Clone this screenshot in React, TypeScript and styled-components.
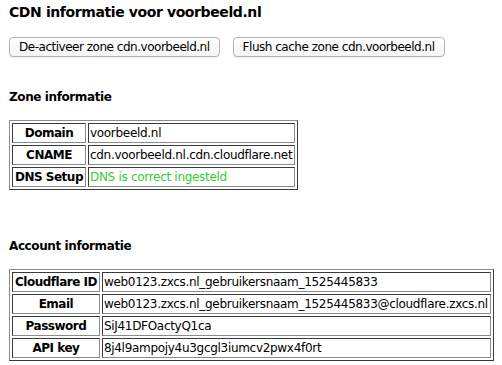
import React from "react";
import styled, { createGlobalStyle } from "styled-components";

const GlobalStyle = createGlobalStyle`
  html, body {
    margin: 0;
    padding: 0;
    background: #ffffff;
  }
  body {
    font-family: Verdana, "DejaVu Sans", sans-serif;
    color: #000000;
  }
`;

const Page = styled.div`
  padding: 4px 9px 0;
`;

const Title = styled.h1`
  margin: 0;
  font-size: 14px;
  line-height: 17px;
  font-weight: bold;
  letter-spacing: -0.4px;
`;

const ButtonRow = styled.div`
  display: flex;
  gap: 13px;
  margin-top: 16px;
`;

const Button = styled.button`
  height: 20px;
  padding: 0 9px;
  font-family: "Lucida Grande", "DejaVu Sans", sans-serif;
  font-size: 12px;
  line-height: 18px;
  letter-spacing: -0.48px;
  color: #000000;
  background: linear-gradient(#ffffff, #f4f4f4);
  border: 1px solid #b4b4b4;
  border-radius: 4px;
  box-shadow: 0 1px 0 rgba(0, 0, 0, 0.06);
`;

const Heading = styled.h3<{ $top: number }>`
  margin: ${p => p.$top}px 0 0;
  font-size: 12px;
  line-height: 15px;
  font-weight: bold;
  letter-spacing: -0.4px;
`;

const InfoTable = styled.table`
  margin-top: 15px;
  border: 1px solid;
  border-color: #8a8a8a #3a3a3a #3a3a3a #8a8a8a;
  border-spacing: 2px;
  font-size: 12px;
`;

const Th = styled.th`
  border: 1px solid;
  border-color: #3a3a3a #8a8a8a #8a8a8a #3a3a3a;
  padding: 1px 2px;
  line-height: 16px;
  text-align: center;
  font-weight: bold;
  letter-spacing: -0.5px;
  white-space: nowrap;
`;

const Td = styled.td<{ $ok?: boolean }>`
  border: 1px solid;
  border-color: #3a3a3a #8a8a8a #8a8a8a #3a3a3a;
  padding: 1px 2px 1px 1px;
  line-height: 16px;
  letter-spacing: -0.3px;
  white-space: nowrap;
  color: ${p => (p.$ok ? "#33cc33" : "#000000")};
`;

type Row = { label: string; value: string; ok?: boolean };

const zone: Row[] = [
  { label: "Domain", value: "voorbeeld.nl" },
  { label: "CNAME", value: "cdn.voorbeeld.nl.cdn.cloudflare.net" },
  { label: "DNS Setup", value: "DNS is correct ingesteld", ok: true },
];

const account: Row[] = [
  { label: "Cloudflare ID", value: "web0123.zxcs.nl_gebruikersnaam_1525445833" },
  { label: "Email", value: "web0123.zxcs.nl_gebruikersnaam_1525445833@cloudflare.zxcs.nl" },
  { label: "Password", value: "SiJ41DFOactyQ1ca" },
  { label: "API key", value: "8j4l9ampojy4u3gcgl3iumcv2pwx4f0rt" },
];

const Info = ({ rows }: { rows: Row[] }) => (
  <InfoTable>
    <tbody>
      {rows.map(r => (
        <tr key={r.label}>
          <Th>{r.label}</Th>
          <Td $ok={r.ok}>{r.value}</Td>
        </tr>
      ))}
    </tbody>
  </InfoTable>
);

export default function App() {
  return (
    <>
      <GlobalStyle />
      <Page>
        <Title>CDN informatie voor voorbeeld.nl</Title>
        <ButtonRow>
          <Button>De-activeer zone cdn.voorbeeld.nl</Button>
          <Button>Flush cache zone cdn.voorbeeld.nl</Button>
        </ButtonRow>
        <Heading $top={33}>Zone informatie</Heading>
        <Info rows={zone} />
        <Heading $top={49}>Account informatie</Heading>
        <Info rows={account} />
      </Page>
    </>
  );
}
